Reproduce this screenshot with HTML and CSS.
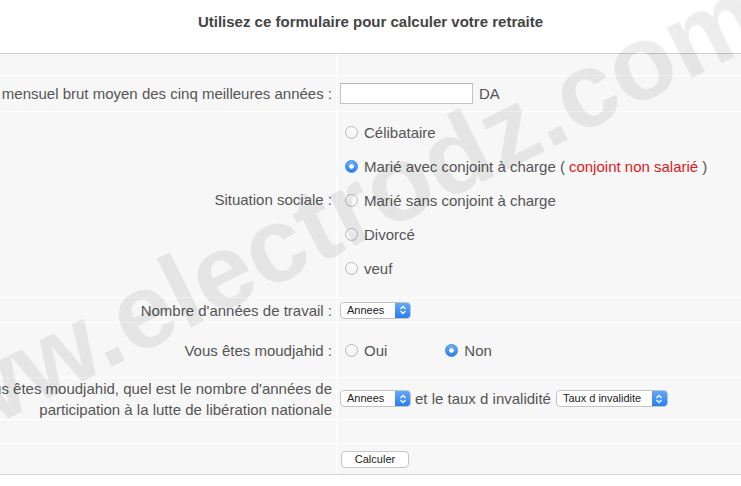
FILE: index.html
```html
<!DOCTYPE html>
<html>
  <head>
    <title>Calcul de la retraite</title>
    <link rel="stylesheet" href="styles.css">
  </head>
  <body>
    <div class="page">
      <h1 class="title">Utilisez ce formulaire pour calculer votre retraite</h1>

      <div class="form">
        <div class="cell label"></div>
        <div class="cell value"></div>

        <div class="cell label">Salaire mensuel brut moyen des cinq meilleures années :</div>
        <div class="cell value">
          <input class="amount" type="text">
          <span class="unit">DA</span>
        </div>

        <div class="cell label situation-label">Situation sociale :</div>
        <div class="cell value">
          <div class="choices">
            <label class="choice"><input type="radio" name="situation"> Célibataire</label>
            <label class="choice"><input type="radio" name="situation" checked> Marié avec conjoint à charge ( <span class="warn">conjoint non salarié</span> )</label>
            <label class="choice"><input type="radio" name="situation"> Marié sans conjoint à charge</label>
            <label class="choice"><input type="radio" name="situation"> Divorcé</label>
            <label class="choice"><input type="radio" name="situation"> veuf</label>
          </div>
        </div>

        <div class="cell label">Nombre d'années de travail :</div>
        <div class="cell value">
          <span class="select years"><span class="select-text">Annees</span><span class="select-arrows"><svg viewBox="0 0 8 10" width="8" height="10"><path d="M1.5 4 L4 1.5 L6.5 4 M1.5 6 L4 8.5 L6.5 6" fill="none" stroke="#fff" stroke-width="1.3"/></svg></span></span>
        </div>

        <div class="cell label">Vous êtes moudjahid :</div>
        <div class="cell value">
          <label class="choice inline"><input type="radio" name="moudjahid"> Oui</label>
          <label class="choice inline"><input type="radio" name="moudjahid" checked> Non</label>
        </div>

        <div class="cell label">Si vous êtes moudjahid, quel est le nombre d'années de<br>participation à la lutte de libération nationale</div>
        <div class="cell value">
          <span class="select years"><span class="select-text">Annees</span><span class="select-arrows"><svg viewBox="0 0 8 10" width="8" height="10"><path d="M1.5 4 L4 1.5 L6.5 4 M1.5 6 L4 8.5 L6.5 6" fill="none" stroke="#fff" stroke-width="1.3"/></svg></span></span>
          <span class="between">et le taux d invalidité</span>
          <span class="select rate"><span class="select-text">Taux d invalidite</span><span class="select-arrows"><svg viewBox="0 0 8 10" width="8" height="10"><path d="M1.5 4 L4 1.5 L6.5 4 M1.5 6 L4 8.5 L6.5 6" fill="none" stroke="#fff" stroke-width="1.3"/></svg></span></span>
        </div>

        <div class="cell label"></div>
        <div class="cell value"></div>

        <div class="cell label last"></div>
        <div class="cell value last">
          <button class="submit" type="button">Calculer</button>
        </div>
      </div>

      <div class="watermark">www.electrodz.com</div>
    </div>
  </body>
</html>
```

FILE: styles.css
```css
body {
  margin: 0;
  background: #fff;
  font-family: "Liberation Sans", Arial, sans-serif;
  color: #555;
  overflow: hidden;
}

.page {
  position: relative;
  width: 741px;
  height: 486px;
  overflow: hidden;
}

.title {
  margin: 0;
  height: 53px;
  box-sizing: border-box;
  padding-top: 13px;
  font-size: 15px;
  line-height: 18px;
  text-align: center;
  color: #444;
}

/* tableau du formulaire */
.form {
  display: grid;
  grid-template-columns: 407px 1fr;
  grid-template-rows: 22px 36px 186px 25px 55px 42px 24px 30px;
  margin-left: -70px;
  background: #f7f7f8;
  border-top: 1px solid #cfcfcf;
  border-bottom: 1px solid #d4d4d4;
  font-size: 15px;
}

.cell {
  box-sizing: border-box;
  border-bottom: 1px solid #fff;
  display: flex;
  align-items: center;
}

.cell.last {
  border-bottom: none;
}

.label {
  justify-content: flex-end;
  text-align: right;
  padding-right: 4px;
  border-right: 1px solid #fff;
  white-space: nowrap;
  line-height: 21px;
}

.situation-label {
  padding-bottom: 10px;
}

.value {
  padding-left: 2px;
  white-space: nowrap;
}

.amount {
  width: 133px;
  height: 21px;
  box-sizing: border-box;
  margin: 0 0 0 1px;
  border: 1px solid #c4c4c4;
  border-top-color: #b4b4b4;
  background: #fff;
}

.unit {
  margin-left: 6px;
}

.choices {
  align-self: flex-start;
  display: flex;
  flex-direction: column;
  gap: 17px;
  padding-top: 12px;
}

.choice {
  display: flex;
  align-items: center;
  line-height: 17px;
}

.choice.inline {
  margin-right: 52px;
}

.choice input {
  appearance: none;
  -webkit-appearance: none;
  width: 13px;
  height: 13px;
  margin: 0 6px 0 6px;
  border: 1px solid #b8b8b8;
  border-radius: 50%;
  background: linear-gradient(#fff, #f1f1f1);
  box-sizing: border-box;
}

.choice input:checked {
  border-color: #3a85e6;
  background: radial-gradient(circle, #fff 0, #fff 2px, transparent 2.5px),
    linear-gradient(#6cb3fa, #2a7ff0);
}

.warn {
  color: #e2171c;
  margin: 0 4px;
}

/* listes déroulantes */
.select {
  display: inline-flex;
  height: 17px;
  box-sizing: border-box;
  border: 1px solid #c3c3c3;
  border-radius: 4px;
  background: #fff;
  overflow: hidden;
  font-size: 11px;
  color: #222;
}

.select-text {
  flex: 1;
  padding-left: 6px;
  line-height: 15px;
}

.select-arrows {
  width: 15px;
  display: flex;
  align-items: center;
  justify-content: center;
  background: linear-gradient(#62a9fa, #2b7ef0);
}

.select.years {
  width: 71px;
  margin-left: 1px;
}

.select.rate {
  width: 112px;
}

.between {
  margin: 0 5px 0 4px;
}

.submit {
  width: 68px;
  height: 17px;
  margin: 0 0 0 2px;
  padding: 0;
  border: 1px solid #c6c6c6;
  border-radius: 4px;
  background: #fff;
  font-family: "Liberation Sans", Arial, sans-serif;
  font-size: 11px;
  color: #222;
}

/* filigrane */
.watermark {
  position: absolute;
  left: -113px;
  top: 389px;
  font-size: 106px;
  line-height: 1;
  font-weight: bold;
  white-space: nowrap;
  color: rgba(0, 0, 0, 0.07);
  transform-origin: 0 89px;
  transform: rotate(-26.5deg);
  pointer-events: none;
}
```
